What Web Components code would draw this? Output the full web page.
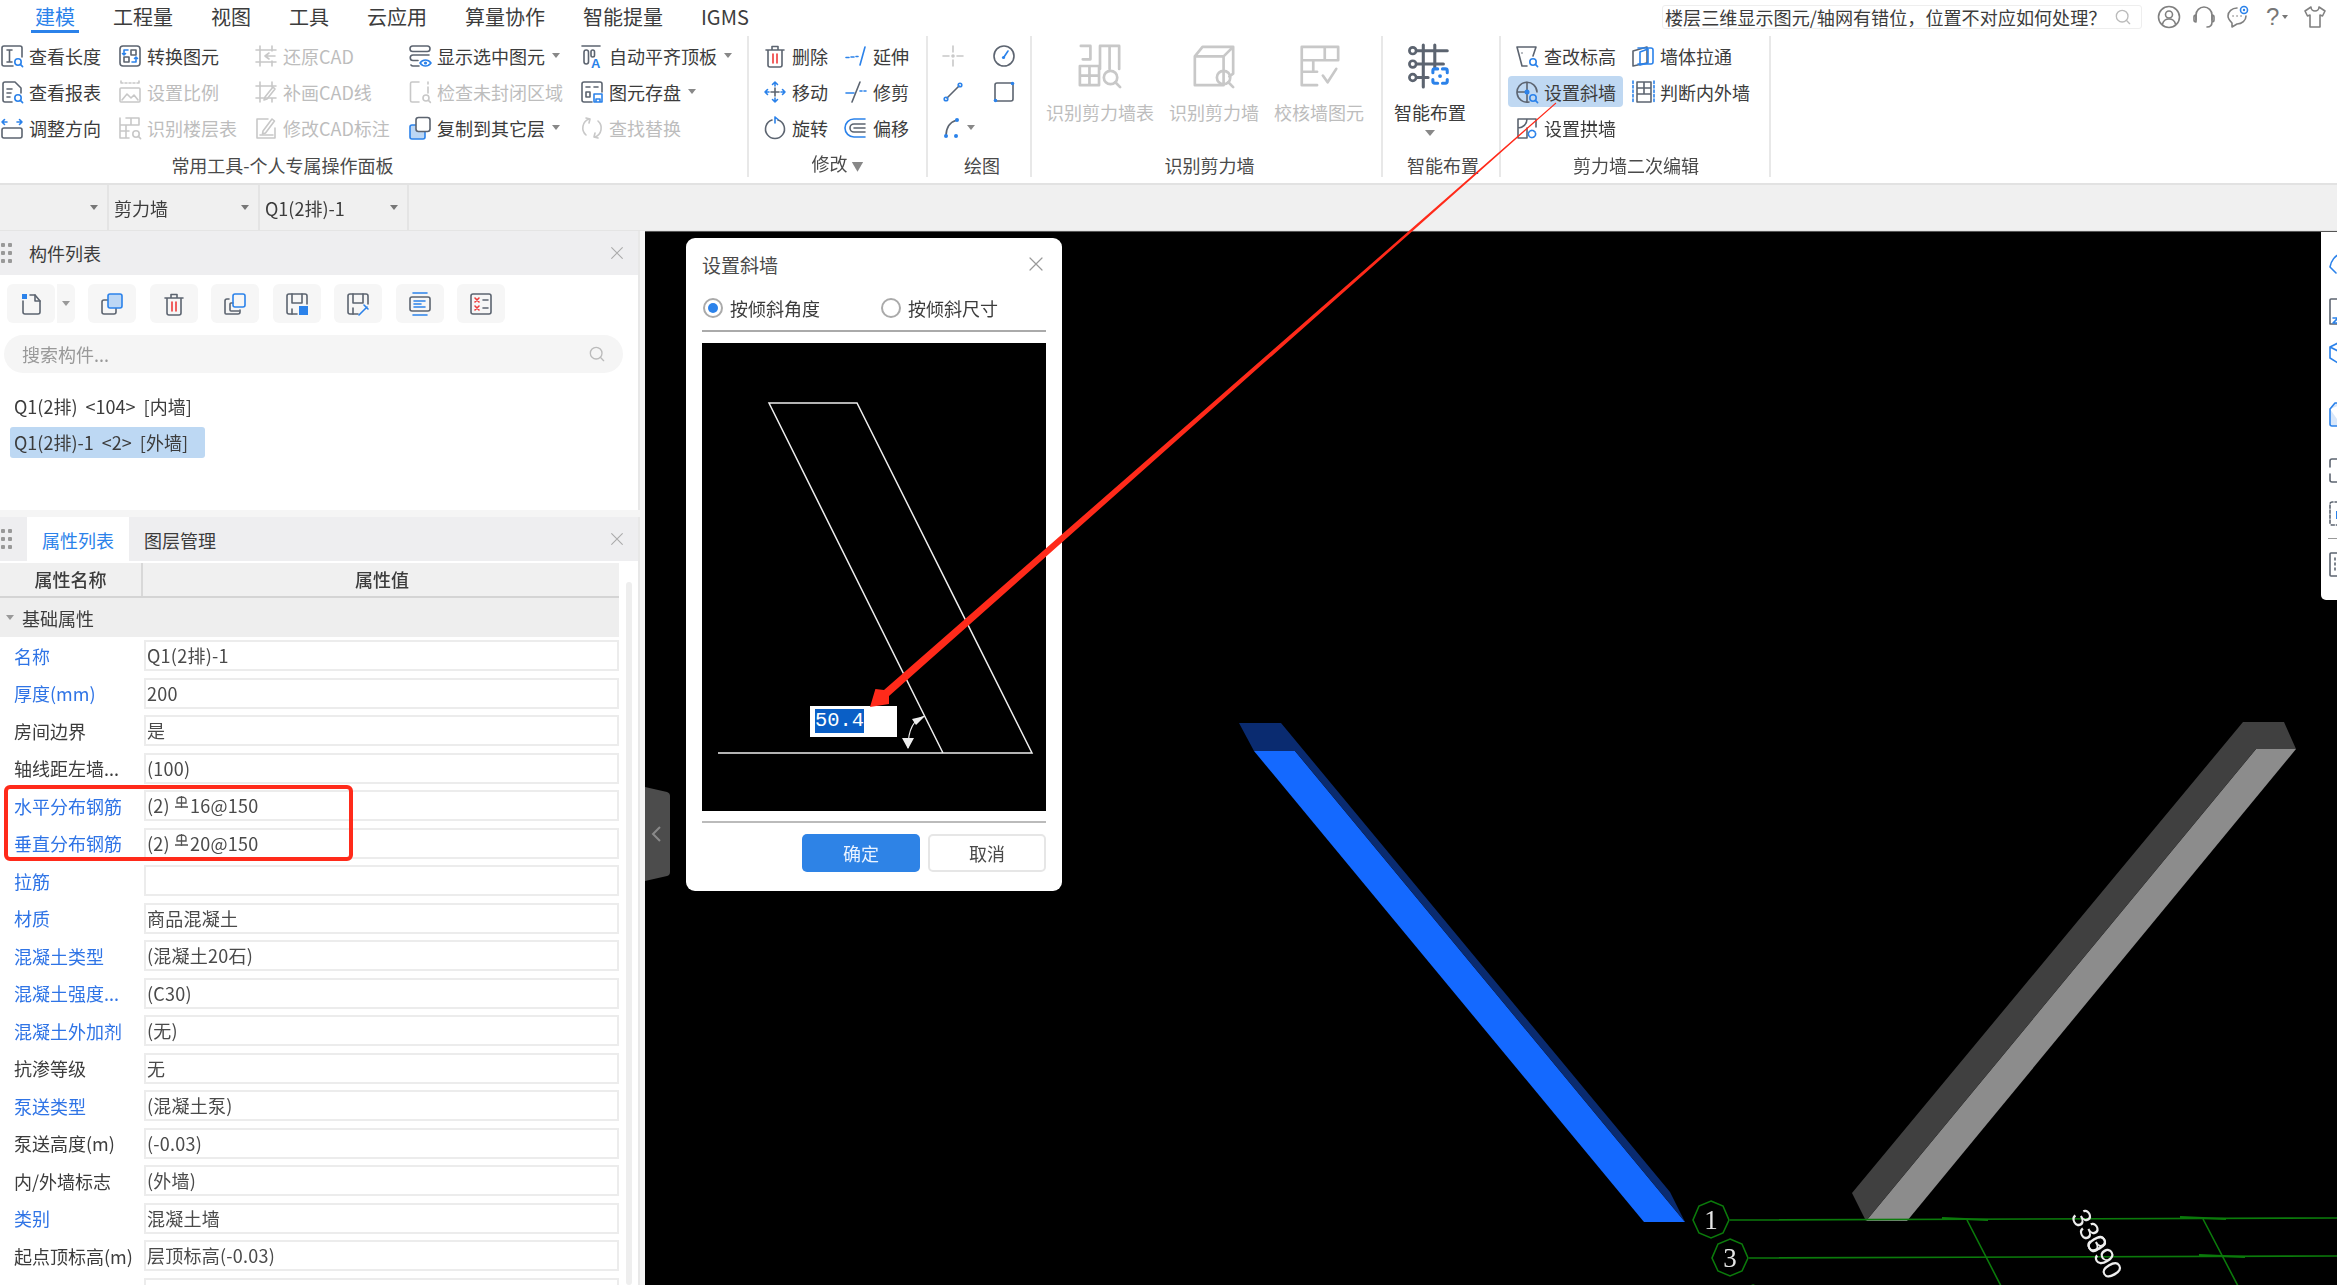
<!DOCTYPE html>
<html lang="zh-CN">
<head>
<meta charset="UTF-8">
<title>设置斜墙</title>
<style>
  html, body { margin: 0; height: 100%; overflow: hidden; background: #fff; }
</style>
</head>
<body>

<template id="appTpl">
  <style>
    :host { display: flex; flex-direction: column; position: relative; width: 100vw; height: 100vh; overflow: hidden;
      font-family: "Noto Sans CJK SC", "Noto Sans", sans-serif; font-size: 18px; color: #3c3c3c; --accent: #2b82ea; filter: blur(.45px); }
    .main { flex: 1; display: flex; min-height: 0; }
  </style>
  <slot name="top"></slot>
  <div class="main"><slot name="side"></slot><slot name="view"></slot></div>
  <slot name="over"></slot>
</template>

<template id="topbarTpl">
  <style>
    :host { display: flex; align-items: center; height: 33px; background: #fff; flex: none; }
    .tabs { display: flex; gap: 38px; padding-left: 35px; font-size: 20px; line-height: 30px; }
    ::slotted([active]) { color: #2b82ea; }
    .right { margin-left: auto; display: flex; align-items: center; padding-right: 10px; color: #808080; }
    .bar { position: absolute; left: 31px; top: 30px; width: 48px; height: 3px; background: #2b82ea; }
  </style>
  <div class="tabs"><slot></slot></div>
  <div class="bar"></div>
  <div class="right"><slot name="right"></slot></div>
</template>

<template id="helpTpl">
  <style>
    :host { display: flex; align-items: center; width: 480px; height: 24px; box-sizing: border-box; border: 1px solid #eee; border-radius: 3px; padding: 0 8px 0 2px; margin-right: 15px; overflow: hidden; }
    span { flex: 1; white-space: nowrap; overflow: hidden; color: #3c3c3c; font-size: 18.1px; }
    gl-icon { color: #bbb; }
  </style>
  <span><slot></slot></span><gl-icon name="search" size="20"></gl-icon>
</template>

<template id="groupTpl">
  <style>
    :host { display: flex; flex-direction: column; height: 141px; box-sizing: border-box; border-right: 2px solid #e8e8e8; flex: none; }
    .body { flex: 1; min-height: 0; }
    .label { height: 24px; line-height: 24px; text-align: center; font-size: 18px; color: #4a4a4a; white-space: nowrap; }
  </style>
  <div class="body"><slot></slot></div>
  <div class="label"><slot name="label"></slot></div>
</template>

<template id="toolTpl">
  <style>
    :host { display: flex; align-items: center; height: 31px; align-self: center; gap: 5px; white-space: nowrap; color: #3c3c3c; --ic: #5c6470; }
    :host([disabled]) { color: #bdbdbd; --ic: #c8c8c8; --accent: #c8c8c8; }
    :host([active]) { background: #bfd8f2; border-radius: 4px; padding: 0 7px; margin-left: -7px; }
    gl-icon { color: var(--ic); flex: none; }
    .caret { display: none; width: 0; height: 0; border: 4px solid transparent; border-top: 5px solid #888; border-bottom: 0; margin-left: 2px; }
    :host([caret]) .caret { display: block; }
  </style>
  <gl-icon></gl-icon><span class="t"></span><i class="caret"></i>
</template>

<template id="bigToolTpl">
  <style>
    :host { display: flex; flex-direction: column; align-items: center; padding-top: 7px; white-space: nowrap; color: #3c3c3c; --ic: #5c6470; }
    :host([disabled]) { color: #bdbdbd; --ic: #c8c8c8; --accent: #c8c8c8; }
    gl-icon { color: var(--ic); }
    .t { line-height: 24px; margin-top: 11px; }
  </style>
  <gl-icon size="46" vb="48"></gl-icon><span class="t"></span><slot></slot>
</template>

<template id="comboTpl">
  <style>
    :host { display: flex; align-items: center; box-sizing: border-box; height: 100%; padding: 0 9px 0 5px; border-right: 2px solid #e4e4e4; color: #3c3c3c; }
    span { flex: 1; }
    i { width: 0; height: 0; border: 4px solid transparent; border-top: 5px solid #777; border-bottom: 0; }
  </style>
  <span><slot></slot></span><i></i>
</template>

<template id="panelTpl">
  <style>
    :host { display: flex; flex-direction: column; box-sizing: border-box; width: 640px; background: #fff; border-right: 2px solid #e8e8e8; overflow: hidden; }
    .head { display: flex; align-items: stretch; height: 44px; flex: none; background: #eeeef0; }
    .grip { width: 27px; display: grid; grid-template-columns: 4px 4px; grid-auto-rows: 4px; gap: 4px 3px; align-content: center; padding-left: 1px; box-sizing: border-box; }
    .grip i { background: #999; border-radius: 1px; }
    .title { flex: 1; display: flex; align-items: center; }
    .x { width: 29px; display: flex; align-items: center; color: #aaa; }
    .body { flex: 1; min-height: 0; position: relative; }
  </style>
  <div class="head">
    <div class="grip"><i></i><i></i><i></i><i></i><i></i><i></i></div>
    <div class="title"><slot name="title"></slot></div>
    <div class="x"><gl-icon name="close" size="16"></gl-icon></div>
  </div>
  <div class="body"><slot></slot></div>
</template>

<template id="iconBtnTpl">
  <style>
    :host { display: flex; align-items: center; justify-content: center; width: 48px; height: 39px; background: #f6f6f6; border-radius: 6px; color: #5c6470; flex: none; }
  </style>
  <gl-icon></gl-icon>
</template>

<template id="propRowTpl">
  <style>
    :host { display: flex; align-items: center; height: 37.5px; flex: none; color: #3c3c3c; }
    :host([link]) .n { color: #2f74e6; }
    .n { width: 144px; padding-left: 14px; box-sizing: border-box; white-space: nowrap; font-size: 18px; }
    .v { width: 475px; height: 31px; box-sizing: border-box; border: 2px solid #ececec; padding-left: 1px; line-height: 26px; white-space: nowrap; font-size: 18px; letter-spacing: .25px; color: #4a4a4a; }
  </style>
  <div class="n"></div><div class="v"><slot></slot></div>
</template>

<template id="dialogTpl">
  <style>
    :host { display: flex; flex-direction: column; position: absolute; left: 41px; top: 6px; width: 376px; height: 653px; box-sizing: border-box; padding: 0 16px; background: #fff; border-radius: 9px; color: #3c3c3c; }
    .head { display: flex; align-items: center; justify-content: space-between; height: 52px; box-sizing: border-box; font-size: 19px; color: #4a4a4a; }
    .head gl-icon { color: #999; margin-right: 1px; }
    .radios { display: flex; align-items: center; border-bottom: 2px solid #aaa; padding-bottom: 5px; font-size: 18px; height: 35px; }
    .radios label { display: flex; align-items: center; gap: 7px; width: 178px; flex: none; padding-left: 1px; box-sizing: border-box; white-space: nowrap; }
    .radio { width: 20px; height: 20px; flex: none; box-sizing: border-box; border-radius: 50%; border: 2px solid #aaa; display: flex; align-items: center; justify-content: center; }
    .radio.on i { width: 10px; height: 10px; border-radius: 50%; background: #2b82ea; }
    .canvas { position: relative; height: 468px; margin-top: 11px; background: #000; flex: none; }
    .canvas svg { display: block; }
    .input { position: absolute; left: 108px; top: 363px; width: 87px; height: 31px; background: #fff; padding-left: 5px; box-sizing: border-box; font: 20.4px/31px "Liberation Mono", monospace; }
    .input span { display: inline-block; line-height: 24px; background: #0a5fc6; color: #fff; vertical-align: 1px; }
    .foot { flex: 1; margin-top: 10px; border-top: 2px solid #bbb; display: flex; justify-content: flex-end; gap: 8px; padding-top: 11px; }
    .btn { height: 38px; border-radius: 5px; display: flex; align-items: center; justify-content: center; font-size: 18px; box-sizing: border-box; }
    .ok { width: 118px; background: #2e83e6; color: #eaf3ff; }
    .no { width: 118px; border: 2px solid #e6e6e6; color: #4a4a4a; }
  </style>
  <div class="head"><span><slot name="title"></slot></span><gl-icon name="close" size="18"></gl-icon></div>
  <div class="radios">
    <label><span class="radio on"><i></i></span>按倾斜角度</label>
    <label><span class="radio"></span>按倾斜尺寸</label>
  </div>
  <div class="canvas">
    <svg width="344" height="468" viewBox="702 344 344 468" fill="none" stroke="#eee" stroke-width="1.5">
      <path d="M718 754H1032L857 404H769L943 754"/>
      <path d="M925 717C913 720 908 732 908 749" stroke-width="1.2"/>
      <path d="M925 717l-13 3 4 6zM908 750l-6-11h12z" fill="#eee" stroke="none"/>
    </svg>
    <div class="input"><span>50.4</span></div>
  </div>
  <div class="foot"><div class="btn ok">确定</div><div class="btn no">取消</div></div>
</template>

<template id="viewTpl">
  <style>
    :host { display: block; position: relative; flex: 1; background: #000; border-top: 1px solid #555; overflow: hidden; }
    svg.scene { position: absolute; left: 0; top: 0; display: block; }
    .handle { position: absolute; left: 0; top: 555px; }
    .rail { position: absolute; right: 0; top: 0; width: 16px; height: 368px; background: #fff; border-bottom-left-radius: 5px; overflow: hidden; padding: 21px 0 0 8px; box-sizing: border-box; color: #5c6470; }
    .rail gl-icon { display: block; width: 24px; }
    .rail hr { width: 14px; margin: 13px 0; border: 0; border-top: 1px solid #999; margin-left: -1px; }
  </style>
  <svg class="scene" width="1692" height="1054" viewBox="645 231 1692 1054" fill="none">
    <path d="M1254 750H1295L1685 1221H1644Z" fill="#1469ff"/>
    <path d="M1239 722H1281L1670 1191 1685 1221 1295 750H1254Z" fill="#0a2b70"/>
    <path d="M1866 1220H1907L2296 748H2256Z" fill="#8c8c8c"/>
    <path d="M1852 1192 2243 721H2284L2296 748H2256L1866 1220Z" fill="#404040"/>
    <g stroke="#0b7a0b" stroke-width="1.6">
      <path d="M1730 1219 2337 1217M1749 1257 2337 1255"/>
      <path d="M1967 1219 2001 1285M2203 1218 2238 1285"/>
      <path d="M1942 1217l46 2M2180 1216l46 2M2199 1254l46 2" stroke-width="2"/>
      <polygon points="1711,1200 1723,1205 1729,1219 1723,1232 1711,1237 1699,1232 1693,1219 1699,1205"/>
      <polygon points="1730,1238 1742,1243 1748,1257 1742,1270 1730,1275 1718,1270 1712,1257 1718,1243"/>
      <polygon points="1753,1284 1765,1289 1741,1289"/>
    </g>
    <g fill="#e6e6e6" font-family="Liberation Serif, serif" font-size="27" text-anchor="middle">
      <text x="1711" y="1228">1</text>
      <text x="1730" y="1266">3</text>
    </g>
    <g fill="#eee" font-family="Liberation Sans, sans-serif" font-size="27">
      <text transform="translate(2070 1215) rotate(60)">330</text>
      <text transform="translate(2085 1241) rotate(60)">390</text>
    </g>
  </svg>
  <svg class="handle" width="25" height="94" viewBox="0 0 25 94">
    <path d="M0 0 22 5Q25 6 25 9V85Q25 88 22 89L0 94Z" fill="#4c4c4c"/>
    <path d="M15 40 8 47 15 54" fill="none" stroke="#8a8a8a" stroke-width="2"/>
  </svg>
  <div class="rail">
    <gl-icon name="railCone"></gl-icon>
    <gl-icon name="railDoc" style="margin-top:21px"></gl-icon>
    <gl-icon name="railCube" style="margin-top:18px"></gl-icon>
    <gl-icon name="railBox" style="margin-top:37px"></gl-icon>
    <gl-icon name="railFrame" style="margin-top:33px"></gl-icon>
    <gl-icon name="railDash" style="margin-top:19px"></gl-icon>
    <hr>
    <gl-icon name="railList"></gl-icon>
  </div>
  <slot></slot>
</template>

<template id="marksTpl">
  <style>
    :host { position: absolute; left: 0; top: 0; display: block; pointer-events: none; }
    svg { display: block; }
  </style>
  <svg width="2337" height="1285" viewBox="0 0 2337 1285" fill="none">
    <rect x="6" y="787" width="345" height="72" rx="4" stroke="#ff2a1a" stroke-width="4"/>
    <path d="M870 707 889 704 889 696 1556.3 103.4 1555.7 102.6 884 690 875.4 689Z" fill="#ff2a1a"/>
  </svg>
</template>

<gl-app>
  <gl-topbar slot="top">
    <span active>建模</span><span>工程量</span><span>视图</span><span>工具</span><span>云应用</span><span>算量协作</span><span>智能提量</span><span>IGMS</span>
    <gl-help slot="right">楼层三维显示图元/轴网有错位，位置不对应如何处理？</gl-help>
    <gl-icon slot="right" name="user" style="margin-right:11px"></gl-icon>
    <gl-icon slot="right" name="headset" style="margin-right:10px"></gl-icon>
    <gl-icon slot="right" name="chat" style="margin-right:16px"></gl-icon>
    <gl-help-q slot="right"></gl-help-q>
    <gl-icon slot="right" name="shirt"></gl-icon>
  </gl-topbar>

  <gl-ribbon slot="top">
    <gl-group style="width:749px">
      <gl-tool-grid cols="118px 136px 154px 172px 1fr" pad="0">
        <gl-tool icon="len" label="查看长度"></gl-tool>
        <gl-tool icon="convert" label="转换图元"></gl-tool>
        <gl-tool icon="restore" label="还原CAD" disabled></gl-tool>
        <gl-tool icon="show" label="显示选中图元" caret></gl-tool>
        <gl-tool icon="align" label="自动平齐顶板" caret></gl-tool>
        <gl-tool icon="report" label="查看报表"></gl-tool>
        <gl-tool icon="scale" label="设置比例" disabled></gl-tool>
        <gl-tool icon="redraw" label="补画CAD线" disabled></gl-tool>
        <gl-tool icon="check" label="检查未封闭区域" disabled></gl-tool>
        <gl-tool icon="save" label="图元存盘" caret></gl-tool>
        <gl-tool icon="dir" label="调整方向"></gl-tool>
        <gl-tool icon="floor" label="识别楼层表" disabled></gl-tool>
        <gl-tool icon="editcad" label="修改CAD标注" disabled></gl-tool>
        <gl-tool icon="copyto" label="复制到其它层" caret></gl-tool>
        <gl-tool icon="replace" label="查找替换" disabled></gl-tool>
      </gl-tool-grid>
      <span slot="label" style="display:block;padding-right:182px">常用工具-个人专属操作面板</span>
    </gl-group>
    <gl-group style="width:179px">
      <gl-tool-grid cols="81px 1fr" pad="14">
        <gl-tool icon="trash" label="删除"></gl-tool>
        <gl-tool icon="extend" label="延伸"></gl-tool>
        <gl-tool icon="move" label="移动"></gl-tool>
        <gl-tool icon="trim" label="修剪"></gl-tool>
        <gl-tool icon="rotate" label="旋转"></gl-tool>
        <gl-tool icon="offset" label="偏移"></gl-tool>
      </gl-tool-grid>
      <span slot="label" style="position:relative;top:-2px">修改 <small style="color:#888;font-size:12px">▼</small></span>
    </gl-group>
    <gl-group style="width:104px">
      <gl-tool-grid cols="51px 1fr" pad="13">
        <gl-tool icon="point" label="" disabled></gl-tool>
        <gl-tool icon="compass" label=""></gl-tool>
        <gl-tool icon="line" label=""></gl-tool>
        <gl-tool icon="rect" label=""></gl-tool>
        <gl-tool icon="arc" label="" caret></gl-tool>
      </gl-tool-grid>
      <span slot="label" style="display:block;padding-left:6px">绘图</span>
    </gl-group>
    <gl-group style="width:351px">
      <div style="display:flex;gap:15px;padding-left:14px">
        <gl-big-tool icon="wallTable" label="识别剪力墙表" disabled></gl-big-tool>
        <gl-big-tool icon="wall" label="识别剪力墙" disabled></gl-big-tool>
        <gl-big-tool icon="verify" label="校核墙图元" disabled></gl-big-tool>
      </div>
      <span slot="label" style="display:block;padding-left:6px">识别剪力墙</span>
    </gl-group>
    <gl-group style="width:118px">
      <div style="display:flex;padding-left:11px">
        <gl-big-tool icon="smart" label="智能布置">
          <i style="width:0;height:0;border:5px solid transparent;border-top:6px solid #888;border-bottom:0;margin-top:6px"></i>
        </gl-big-tool>
      </div>
      <span slot="label" style="display:block;padding-left:4px">智能布置</span>
    </gl-group>
    <gl-group style="width:270px">
      <gl-tool-grid cols="116px 1fr" pad="14">
        <gl-tool icon="elev" label="查改标高"></gl-tool>
        <gl-tool icon="stretch" label="墙体拉通"></gl-tool>
        <gl-tool icon="slant" label="设置斜墙" active></gl-tool>
        <gl-tool icon="judge" label="判断内外墙"></gl-tool>
        <gl-tool icon="arch" label="设置拱墙"></gl-tool>
      </gl-tool-grid>
      <span slot="label" style="display:block;padding-left:2px">剪力墙二次编辑</span>
    </gl-group>
  </gl-ribbon>

  <gl-combobar slot="top">
    <gl-combo style="width:109px"></gl-combo>
    <gl-combo style="width:151px">剪力墙</gl-combo>
    <gl-combo style="width:149px">Q1(2排)-1</gl-combo>
  </gl-combobar>

  <gl-side slot="side">
    <gl-panel style="height:279px">
      <span slot="title" style="padding-left:2px">构件列表</span>
      <gl-component-list></gl-component-list>
    </gl-panel>
    <gl-panel style="flex:1;min-height:0">
      <gl-head-tabs slot="title"></gl-head-tabs>
      <gl-prop-table>
        <gl-prop name="名称" link>Q1(2排)-1</gl-prop>
        <gl-prop name="厚度(mm)" link>200</gl-prop>
        <gl-prop name="房间边界">是</gl-prop>
        <gl-prop name="轴线距左墙...">(100)</gl-prop>
        <gl-prop name="水平分布钢筋" link>(2)<gl-rebar></gl-rebar>16@150</gl-prop>
        <gl-prop name="垂直分布钢筋" link>(2)<gl-rebar></gl-rebar>20@150</gl-prop>
        <gl-prop name="拉筋" link></gl-prop>
        <gl-prop name="材质" link>商品混凝土</gl-prop>
        <gl-prop name="混凝土类型" link>(混凝土20石)</gl-prop>
        <gl-prop name="混凝土强度..." link>(C30)</gl-prop>
        <gl-prop name="混凝土外加剂" link>(无)</gl-prop>
        <gl-prop name="抗渗等级">无</gl-prop>
        <gl-prop name="泵送类型" link>(混凝土泵)</gl-prop>
        <gl-prop name="泵送高度(m)">(-0.03)</gl-prop>
        <gl-prop name="内/外墙标志">(外墙)</gl-prop>
        <gl-prop name="类别" link>混凝土墙</gl-prop>
        <gl-prop name="起点顶标高(m)">层顶标高(-0.03)</gl-prop>
        <gl-prop name=""></gl-prop>
      </gl-prop-table>
    </gl-panel>
  </gl-side>

  <gl-view slot="view">
    <gl-dialog><span slot="title">设置斜墙</span></gl-dialog>
  </gl-view>

  <gl-marks slot="over"></gl-marks>
</gl-app>

<script>
  // icon strokes: default is currentColor, .b = accent blue, .f = filled blue, .r = red
  const mag = '<circle class="b" cx="18" cy="18" r="3.2"/><path class="b" d="M20.4 20.4l2.2 2.2"/>';
  const ICONS = {
    search: '<circle cx="11" cy="11" r="7"/><path d="M16 16l4 4"/>',
    close: '<path d="M4 4l16 16M20 4L4 20"/>',
    len: '<path d="M13 22H4a2 2 0 0 1-2-2V4a2 2 0 0 1 2-2h16a2 2 0 0 1 2 2v9"/><path d="M7 6h5M9.5 6v12M7 18h5"/>' + mag,
    report: '<path d="M12 22H5a2 2 0 0 1-2-2V4a2 2 0 0 1 2-2h10l6 6v5"/><path d="M7 9h5M7 13h4M7 17h3"/>' + mag,
    dir: '<rect x="2" y="12" width="20" height="10" rx="2"/><path class="b" d="M2 6h5M2 6l2.5-2.5M2 6l2.5 2.5M22 6h-5M22 6l-2.5-2.5M22 6l-2.5 2.5"/>',
    convert: '<rect x="2" y="2" width="20" height="20" rx="3"/><path d="M13 6h5v5h-5zM6 13h5v5H6z"/><path class="b" d="M10 6H6v5M6 11L4.5 9.5M6 11l1.5-1.5M14 18h4v-5M18 13l-1.5 1.5M18 13l1.5 1.5"/>',
    scale: '<path d="M3 1v4M21 1v4M3 3h18" stroke-dasharray="2 2"/><rect x="2" y="8" width="20" height="14" rx="1"/><path d="M4 20l5-6 4 4 3-3 4 5"/>',
    floor: '<path d="M8 2h5v7h8V2h-8M2 2v20h9M2 9h11M8 9v13M2 15h9"/>' + mag,
    restore: '<path d="M6 2v20M18 2v5M18 17v5M2 6h20M2 18h20"/><path d="M21 12h-10M11 12l4-3M11 12l4 3"/>',
    redraw: '<path d="M6 2v20M18 2v5M18 18v4M2 6h20M2 18h20"/><path d="M11 17l8-10 2 2-8 10-3 1z"/>',
    editcad: '<path d="M21 12v10H3V3h11"/><path d="M9 15l9-12 2.5 2-9 12-3 1z"/><path d="M6 19h13"/>',
    show: '<rect x="2" y="2" width="20" height="5.5" rx="2.7"/><path d="M21 11H5a2.7 2.7 0 0 0 0 5.5h5M11 22H5a2.5 2.5 0 0 1-2-1"/><path class="b" d="M12 19c3-4 8-4 11 0-3 4-8 4-11 0z"/><circle class="f" cx="17.5" cy="19" r="1.6"/>',
    check: '<path d="M11 2H4a1.5 1.5 0 0 0-1.5 1.5v17A1.5 1.5 0 0 0 4 22h7"/><path d="M20 2v2M20 7v6"/><circle cx="18" cy="18" r="3"/><path d="M20.4 20.4l2 2"/>',
    copyto: '<rect x="2" y="9" width="15" height="14" rx="2" fill="#bcd7f5" class="b"/><rect x="8" y="1.5" width="14" height="14" rx="2.5" fill="#fff"/>',
    align: '<path d="M2 2h18"/><rect x="4" y="6" width="4.5" height="14" rx="2.2"/><rect x="11" y="6" width="3.5" height="7" rx="1.7"/><text x="11" y="24" font-size="13" font-family="Liberation Sans" font-weight="700" fill="var(--accent)" stroke="none">A</text>',
    save: '<path d="M12 22H4a2 2 0 0 1-2-2V4a2 2 0 0 1 2-2h16a2 2 0 0 1 2 2v8"/><path d="M6 7h4v0M14 7h4M6 12h4v5H6z"/><path class="b" d="M14 14h8v8h-8zM16 22v-3h4v3"/>',
    replace: '<path d="M9 3a9.5 9.5 0 0 0-3 16M15 21a9.5 9.5 0 0 0 3-16"/><path d="M6 2l4 1-1 4M18 22l-4-1 1-4"/>',
    trash: '<path d="M5 6h14v15a2 2 0 0 1-2 2H7a2 2 0 0 1-2-2zM3 6h18M9 6V2.5h6V6"/><path class="r" d="M10 10v9M14 10v9"/>',
    extend: '<path class="b" d="M2 13.5h3M7 13h3M12 12.5h2"/><path class="b" d="M21 3l-5 18"/>',
    move: '<path d="M12 8v8M8 12h8"/><path class="b" d="M12 2v4M9.5 4.5 12 2l2.5 2.5M12 22v-4M9.5 19.5 12 22l2.5-2.5M2 12h4M4.5 9.500 2 12l2.5 2.5M22 12h-4M19.5 9.5 22 12l-2.5 2.5"/>',
    trim: '<path class="b" d="M2 13h8M16 11h2M20 11h2"/><path d="M16 2L8 22"/>',
    rotate: '<path d="M9 4a9.5 9.5 0 1 0 6 0"/><path class="b" d="M12 1v6M12 1l3 2.5"/>',
    offset: '<path class="b" d="M21 3H10a9 9 0 0 0 0 18h11"/><path d="M21 8H10a4 4 0 0 0 0 8h11M10 12h11"/>',
    point: '<path d="M12 2v6M12 16v6M2 12h6M16 12h6"/><circle cx="12" cy="12" r="1"/>',
    compass: '<circle cx="12" cy="12" r="10"/><path class="b" d="M16 7l-4 6"/><circle class="f" cx="11.5" cy="13.5" r="1.6"/>',
    line: '<path d="M6 18L18 6"/><circle class="b" cx="5" cy="19" r="1.8"/><circle class="b" cx="19" cy="5" r="1.8"/>',
    rect: '<rect x="3" y="3" width="18" height="18" rx="2"/><circle class="f" cx="3.5" cy="20.5" r="1.8"/><circle class="f" cx="20.5" cy="3.5" r="1.8"/>',
    arc: '<path d="M5 20C5 11 9 6 16 4"/><circle class="f" cx="5" cy="20" r="2"/><circle class="f" cx="16" cy="4" r="2"/><circle class="f" cx="15" cy="20" r="2"/>',
    elev: '<path d="M2 3h19l-3 9M2 3l5 19h5M7 9v0"/>' + mag,
    stretch: '<path d="M2 7l14-4v16L2 22z"/><path class="b" d="M7 4h13a2 2 0 0 1 2 2v12a2 2 0 0 1-2 2H7" /><path class="b" d="M9 8l8-3v14l-8 2z"/>',
    slant: '<path d="M14 22a10 10 0 1 1 8-10M2 12h10M12 2v20"/><circle class="f" cx="12" cy="12" r="2.5"/>' + mag,
    judge: '<path d="M6 2h14v20H6zM6 8h14M6 14h14M13 2v12"/><path class="b" stroke-dasharray="2.5 2" d="M2 1v22M23 1v22"/>',
    arch: '<path d="M12 22H3V3h18v8M3 12C8 12 12 8 12 3M12 12v10"/><circle class="b" cx="17" cy="18" r="3.6" stroke-dasharray="2 1"/>',
    wallTable: '<path d="M4 3h10v14H6M24 3h20v24M24 3v24M34 3v24M3 24h20v20H3zM3 34h20M13 24v20"/><circle cx="35" cy="36" r="7"/><path d="M40 41l5 5"/>',
    wall: '<path d="M4 14h30v30H4zM4 14l8-10h32v28l-4 3M34 14l10-10"/><circle cx="34" cy="36" r="7"/><path d="M39 41l5 5"/>',
    verify: '<path d="M6 4h38v14H30V4M6 4v40h16M6 18h24M6 30h16M18 18v12"/><path d="M28 34l5 7 9-14"/>',
    smart: '<circle cx="6" cy="8" r="3.5"/><circle cx="6" cy="22" r="3.5"/><circle cx="6" cy="36" r="3.5"/><path d="M10 8h32M10 22h28M10 36h12M17 2v44M29 2v24" stroke-width="3.2"/><path class="b" stroke-width="3.2" d="M27 31v-2a2 2 0 0 1 2-2h3M37 27h3a2 2 0 0 1 2 2v2M42 38v2a2 2 0 0 1-2 2h-3M32 42h-3a2 2 0 0 1-2-2v-2"/><circle class="f" cx="34.5" cy="34.5" r="2"/>',
    user: '<circle cx="12" cy="12" r="10.5"/><circle cx="12" cy="9.5" r="3.5"/><path d="M5.5 19c1-4 4-5 6.500-5s5.500 1 6.500 5"/>',
    headset: '<path d="M4 15V10a8 8 0 0 1 16 0v5"/><path d="M4 10a2 2 0 0 0-2 2v3a2 2 0 0 0 2 2zM20 10a2 2 0 0 1 2 2v3a2 2 0 0 1-2 2zM20 17c0 3-2 5-5 5"/>',
    chat: '<path d="M11 3C6 3 2 6.500 2 11c0 3 2 5 4 7v4l5-3c5 0 9-3.500 9-8"/><path d="M7 11h.1M11 11h.1M15 11h.1"/><circle class="b" cx="18" cy="5" r="3.500"/><circle class="f" cx="18" cy="5" r="1.200"/>',
    shirt: '<path d="M8 2 2 6l2.500 5L7 10v12h10V10l2.500 1L22 6l-6-4a4 4 0 0 1-8 0z"/>',
    newDoc: '<path d="M11 3h5l5 6v11a2 2 0 0 1-2 2H6a2 2 0 0 1-2-2V9"/><path d="M16 3v6h5"/><rect class="f" x="3" y="2" width="5" height="5"/>',
    copy: '<path d="M8 8H4a2 2 0 0 0-2 2v10a2 2 0 0 0 2 2h10a2 2 0 0 0 2-2v-4"/><rect class="b" x="8" y="2" width="14" height="14" rx="2" fill="#bcd7f5"/>',
    layers: '<path d="M6 7H4a2 2 0 0 0-2 2v12a1 1 0 0 0 1 1h12a2 2 0 0 0 2-2v-2"/><path d="M10 11H8a1 1 0 0 0-1 1v6a1 1 0 0 0 1 1h8"/><rect class="b" x="10" y="2" width="12" height="13" rx="2"/>',
    card: '<path d="M12 22H4a2 2 0 0 1-2-2V4a2 2 0 0 1 2-2h16a2 2 0 0 1 2 2v8"/><path d="M7 2v9h10V2M7 22v-5"/><path class="f" d="M14 14h9v9h-9z"/>',
    pick: '<path d="M12 22H4a2 2 0 0 1-2-2V4a2 2 0 0 1 2-2h16a2 2 0 0 1 2 2v8"/><path d="M7 2v9h10V2M7 22v-6"/><path class="b" d="M13 23l8-8M18 13l4 4"/>',
    listb: '<rect x="2" y="5" width="20" height="14" rx="2"/><path class="b" d="M5 1h14M5 23h14M6 9h11M6 12h7M6 15h11"/>',
    errs: '<rect x="2" y="2" width="20" height="20" rx="2"/><path class="r" d="M6 6l4 4M10 6l-4 4M6 14l4 4M10 14l-4 4"/><path d="M14 8h5M14 16h5"/>',
    railCone: '<path class="b" d="M1 14C2 8 6 2 12 1M1 14l6 6"/>',
    railDoc: '<path d="M8 1H2a1 1 0 0 0-1 1v24h10"/><path class="b" d="M4 20h5l-5 5h5"/>',
    railCube: '<path class="b" d="M1 7l10-5M1 7v11l8 5M1 7l8 4v12"/>',
    railBox: '<path class="b" d="M1 8l5-6h10M1 8v15a2 2 0 0 0 2 2h10" fill="#d8e7fa"/>',
    railFrame: '<path d="M9 1H3a2 2 0 0 0-2 2v6M1 16v6a2 2 0 0 0 2 2h6"/>',
    railDash: '<path stroke-dasharray="3 2" d="M9 1H3a2 2 0 0 0-2 2v19a2 2 0 0 0 2 2h6"/><path class="f" d="M7 10h6v8H7z"/>',
    railList: '<path d="M9 1H2a1 1 0 0 0-1 1v21a1 1 0 0 0 1 1h7"/><path stroke-dasharray="2 3" d="M6 6v14"/>'
  };

  function fromTemplate(host, id) {
    const root = host.attachShadow({ mode: 'open' });
    root.appendChild(document.importNode(document.querySelector(id).content, true));
    return root;
  }

  class GlIcon extends HTMLElement {
    constructor() {
      super();
      this.attachShadow({ mode: 'open' });
    }
    static get observedAttributes() { return ['name']; }
    attributeChangedCallback() { this.render(); }
    connectedCallback() { this.render(); }
    render() {
      const size = this.getAttribute('size') || 24;
      const vb = this.getAttribute('vb') || 24;
      const width = vb == 48 ? 2.8 : 1.6;
      this.shadowRoot.innerHTML = `
        <style>
          :host { display: inline-flex; flex: none; }
          svg { display: block; overflow: visible; }
          .b { stroke: var(--accent); }
          .f { fill: var(--accent); stroke: none; }
          .r { stroke: #ee3a3a; }
        </style>
        <svg width="${size}" height="${size}" viewBox="0 0 ${vb} ${vb}" fill="none" stroke="currentColor" stroke-width="${width}" stroke-linecap="round" stroke-linejoin="round">${ICONS[this.getAttribute('name')] || ''}</svg>`;
    }
  }

  class Simple extends HTMLElement {
    constructor() {
      super();
      fromTemplate(this, this.constructor.tpl);
    }
  }
  class GlApp extends Simple { static get tpl() { return '#appTpl'; } }
  class GlTopbar extends Simple { static get tpl() { return '#topbarTpl'; } }
  class GlHelp extends Simple { static get tpl() { return '#helpTpl'; } }
  class GlGroup extends Simple { static get tpl() { return '#groupTpl'; } }
  class GlCombo extends Simple { static get tpl() { return '#comboTpl'; } }
  class GlPanel extends Simple { static get tpl() { return '#panelTpl'; } }
  class GlDialog extends Simple { static get tpl() { return '#dialogTpl'; } }
  class GlView extends Simple { static get tpl() { return '#viewTpl'; } }
  class GlMarks extends Simple { static get tpl() { return '#marksTpl'; } }

  class GlTool extends Simple {
    static get tpl() { return '#toolTpl'; }
    connectedCallback() {
      this.shadowRoot.querySelector('gl-icon').setAttribute('name', this.getAttribute('icon'));
      const t = this.shadowRoot.querySelector('.t');
      t.textContent = this.getAttribute('label');
      if (!t.textContent) this.style.gap = '0';
    }
  }
  class GlBigTool extends Simple {
    static get tpl() { return '#bigToolTpl'; }
    connectedCallback() {
      this.shadowRoot.querySelector('gl-icon').setAttribute('name', this.getAttribute('icon'));
      this.shadowRoot.querySelector('.t').textContent = this.getAttribute('label');
    }
  }
  class GlIconBtn extends Simple {
    static get tpl() { return '#iconBtnTpl'; }
    connectedCallback() {
      this.shadowRoot.querySelector('gl-icon').setAttribute('name', this.getAttribute('icon'));
    }
  }
  class GlProp extends Simple {
    static get tpl() { return '#propRowTpl'; }
    connectedCallback() {
      this.shadowRoot.querySelector('.n').textContent = this.getAttribute('name');
    }
  }

  class GlToolGrid extends HTMLElement {
    constructor() {
      super();
      this.attachShadow({ mode: 'open' }).innerHTML = '<style>:host{display:grid;grid-auto-rows:36px;padding-top:1.5px;align-items:center;justify-items:start}</style><slot></slot>';
    }
    connectedCallback() {
      this.style.gridTemplateColumns = this.getAttribute('cols');
      this.style.paddingLeft = this.getAttribute('pad') + 'px';
    }
  }
  class GlRibbon extends HTMLElement {
    constructor() {
      super();
      this.attachShadow({ mode: 'open' }).innerHTML = '<style>:host{display:flex;flex:none;box-sizing:border-box;height:152px;padding-top:3px;background:#fff;border-bottom:2px solid #e2e2e2}</style><slot></slot>';
    }
  }
  class GlCombobar extends HTMLElement {
    constructor() {
      super();
      this.attachShadow({ mode: 'open' }).innerHTML = '<style>:host{display:flex;flex:none;height:46px;background:#f0f0f0;box-sizing:border-box;border-bottom:1px solid #e4e4e4}</style><slot></slot>';
    }
  }
  class GlSide extends HTMLElement {
    constructor() {
      super();
      this.attachShadow({ mode: 'open' }).innerHTML = '<style>:host{display:flex;flex-direction:column;gap:7px;width:645px;flex:none;background:#f5f5f5}</style><slot></slot>';
    }
  }
  class GlHelpQ extends HTMLElement {
    constructor() {
      super();
      this.attachShadow({ mode: 'open' }).innerHTML = '<style>:host{display:flex;align-items:center;gap:3px;width:37px;font:24px "Liberation Sans",sans-serif;color:#777}i{border:3px solid transparent;border-top:4px solid #777;border-bottom:0;width:0;height:0}</style>?<i></i>';
    }
  }
  class GlHeadTabs extends HTMLElement {
    constructor() {
      super();
      this.attachShadow({ mode: 'open' }).innerHTML = `<style>
        :host{display:flex;align-self:stretch;height:44px}
        div{display:flex;align-items:center;justify-content:center;width:102px;padding-top:1px}
        .on{background:#fff;color:#2b82ea}
        .off{width:auto;padding-left:15px}
      </style><div class="on">属性列表</div><div class="off">图层管理</div>`;
    }
  }
  class GlRebar extends HTMLElement {
    constructor() {
      super();
      this.attachShadow({ mode: 'open' }).innerHTML = `<style>:host{display:inline-block;vertical-align:4px;margin:0 2px 0 5px}svg{display:block}</style>
        <svg width="13" height="13" viewBox="0 0 13 13" fill="none" stroke="#555" stroke-width="1.3"><path d="M2 7V4a4.500 3 0 0 1 9 0v3zM6.500 0v12M0 11h13"/></svg>`;
    }
  }
  class GlComponentList extends HTMLElement {
    constructor() {
      super();
      this.attachShadow({ mode: 'open' }).innerHTML = `<style>
        :host{display:block;padding:9px 0 0 0}
        .bar{display:flex;gap:13.5px;padding-left:7px}
        .split{display:flex;gap:2px;margin-right:-.5px}
        .caret{display:block;width:0;height:0;border:4px solid transparent;border-top:5px solid #999;border-bottom:0}
        .drop{display:flex;align-items:center;justify-content:center;width:18px;height:39px;background:#f6f6f6;border-radius:0 6px 6px 0}
        .search{display:flex;align-items:center;margin:12px 0 0 4px;width:619px;height:38px;border-radius:19px;background:#f5f5f5;padding:0 16px 0 18px;box-sizing:border-box;color:#999}
        .search span{flex:1}
        .search gl-icon{color:#bbb}
        ul{list-style:none;margin:18px 0 0 0;padding:0 0 0 10px;font-size:18px;color:#3c3c3c}
        li{height:31px;line-height:31px;padding:0 4px;width:max-content;border-radius:3px;margin-bottom:5px;white-space:pre}
        li.on{background:#bdd8f3;width:187px}
      </style>
      <div class="bar">
        <div class="split"><gl-icon-btn icon="newDoc"></gl-icon-btn><span class="drop"><i class="caret"></i></span></div>
        <gl-icon-btn icon="copy"></gl-icon-btn>
        <gl-icon-btn icon="trash"></gl-icon-btn>
        <gl-icon-btn icon="layers"></gl-icon-btn>
        <gl-icon-btn icon="card"></gl-icon-btn>
        <gl-icon-btn icon="pick"></gl-icon-btn>
        <gl-icon-btn icon="listb"></gl-icon-btn>
        <gl-icon-btn icon="errs"></gl-icon-btn>
      </div>
      <div class="search"><span>搜索构件...</span><gl-icon name="search" size="20"></gl-icon></div>
      <ul><li>Q1(2排)  &lt;104&gt;  [内墙]</li><li class="on">Q1(2排)-1  &lt;2&gt;  [外墙]</li></ul>`;
    }
  }
  class GlPropTable extends HTMLElement {
    constructor() {
      super();
      this.attachShadow({ mode: 'open' }).innerHTML = `<style>
        :host{display:block;position:absolute;inset:0;overflow:hidden;padding-top:2px;box-sizing:border-box}
        .track{position:absolute;left:626px;top:21px;bottom:0;width:6px;background:#eee;border-radius:3px}
        .head{display:flex;width:619px;height:35px;line-height:33px;background:#f0f0f0;border-bottom:2px solid #d4d4d4;box-sizing:border-box;font-weight:500;text-align:center}
        .head div:first-child{width:143px;border-right:2px solid #d8d8d8;box-sizing:border-box}
        .head div:last-child{flex:1;padding-left:2px}
        .sec{display:flex;align-items:center;gap:8px;width:619px;height:39px;background:#eee;padding-left:6px;box-sizing:border-box}
        .sec i{width:0;height:0;border:4px solid transparent;border-top:5px solid #999;border-bottom:0}
      </style>
      <div class="track"></div>
      <div class="head"><div>属性名称</div><div>属性值</div></div>
      <div class="sec"><i></i><span>基础属性</span></div>
      <slot></slot>`;
    }
  }

  customElements.define('gl-icon', GlIcon);
  customElements.define('gl-app', GlApp);
  customElements.define('gl-topbar', GlTopbar);
  customElements.define('gl-help', GlHelp);
  customElements.define('gl-help-q', GlHelpQ);
  customElements.define('gl-ribbon', GlRibbon);
  customElements.define('gl-group', GlGroup);
  customElements.define('gl-tool-grid', GlToolGrid);
  customElements.define('gl-tool', GlTool);
  customElements.define('gl-big-tool', GlBigTool);
  customElements.define('gl-combobar', GlCombobar);
  customElements.define('gl-combo', GlCombo);
  customElements.define('gl-side', GlSide);
  customElements.define('gl-panel', GlPanel);
  customElements.define('gl-head-tabs', GlHeadTabs);
  customElements.define('gl-icon-btn', GlIconBtn);
  customElements.define('gl-component-list', GlComponentList);
  customElements.define('gl-prop-table', GlPropTable);
  customElements.define('gl-prop', GlProp);
  customElements.define('gl-rebar', GlRebar);
  customElements.define('gl-view', GlView);
  customElements.define('gl-dialog', GlDialog);
  customElements.define('gl-marks', GlMarks);
</script>
</body>
</html>
